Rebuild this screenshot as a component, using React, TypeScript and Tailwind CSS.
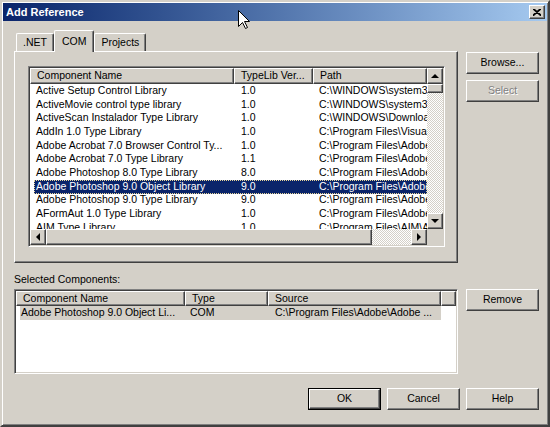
import React from "react";

// classic 3d bevels
const raised =
  "border border-t-white border-l-white border-r-[#404040] border-b-[#404040] shadow-[inset_-1px_-1px_#808080,inset_1px_1px_#d4d0c8]";
const sunken =
  "border border-t-[#808080] border-l-[#808080] border-r-white border-b-white shadow-[inset_1px_1px_#404040,inset_-1px_-1px_#d4d0c8]";
const dither =
  "bg-[repeating-conic-gradient(#d4d0c8_0%_25%,#ffffff_0%_50%)] bg-[length:2px_2px]";

const rows: [string, string, string][] = [
  ["Active Setup Control Library", "1.0", "C:\\WINDOWS\\system32\\asctrls.ocx"],
  ["ActiveMovie control type library", "1.0", "C:\\WINDOWS\\system32\\quartz.dll"],
  ["ActiveScan Instalador Type Library", "1.0", "C:\\WINDOWS\\Downloaded Program Files"],
  ["AddIn 1.0 Type Library", "1.0", "C:\\Program Files\\Visual Studio"],
  ["Adobe Acrobat 7.0 Browser Control Ty...", "1.0", "C:\\Program Files\\Adobe\\Acrobat"],
  ["Adobe Acrobat 7.0 Type Library", "1.1", "C:\\Program Files\\Adobe\\Acrobat"],
  ["Adobe Photoshop 8.0 Type Library", "8.0", "C:\\Program Files\\Adobe\\Photoshop"],
  ["Adobe Photoshop 9.0 Object Library", "9.0", "C:\\Program Files\\Adobe\\Photoshop"],
  ["Adobe Photoshop 9.0 Type Library", "9.0", "C:\\Program Files\\Adobe\\Photoshop"],
  ["AFormAut 1.0 Type Library", "1.0", "C:\\Program Files\\Adobe\\Acrobat"],
  ["AIM Type Library", "1.0", "C:\\Program Files\\AIM\\AIM.exe"],
];

function Btn({ label, disabled, isDefault }: { label: string; disabled?: boolean; isDefault?: boolean }) {
  const inner = (
    <div
      className={`flex h-full w-full items-center justify-center ${raised} ${
        disabled ? "text-[#808080] [text-shadow:1px_1px_#ffffff]" : "text-black"
      }`}
    >
      {label}
    </div>
  );
  if (isDefault) {
    return <div className="h-[22px] w-[73px] border border-black">{inner}</div>;
  }
  return <div className="h-[22px] w-[73px]">{inner}</div>;
}

function Arrow({ dir }: { dir: "up" | "down" | "left" | "right" }) {
  const pts = {
    up: "4,1 0,5 8,5",
    down: "0,1 8,1 4,5",
    left: "5,0 5,8 1,4",
    right: "1,0 1,8 5,4",
  }[dir];
  const vert = dir === "up" || dir === "down";
  return (
    <div className={`flex h-[16px] w-[16px] shrink-0 items-center justify-center bg-[#d4d0c8] ${raised}`}>
      <svg width={vert ? 8 : 6} height={vert ? 6 : 8} viewBox={vert ? "0 0 8 6" : "0 0 6 8"}>
        <polygon points={pts} fill="#000" />
      </svg>
    </div>
  );
}

function HeadCell({ w, children }: { w: string; children?: React.ReactNode }) {
  return (
    <div className={`${w} flex h-full shrink-0 items-center overflow-hidden whitespace-nowrap bg-[#d4d0c8] pl-[6px] ${raised}`}>
      {children}
    </div>
  );
}

function Tab({ label, active }: { label: string; active?: boolean }) {
  return (
    <div
      className={`flex items-center rounded-t-[2px] border-l border-t border-r border-t-white border-l-white border-r-[#404040] bg-[#d4d0c8] shadow-[inset_-1px_0_#808080] ${
        active ? "relative z-10 -mb-[1px] h-[22px] px-[7px]" : "h-[18px] px-[6px]"
      }`}
    >
      {label}
    </div>
  );
}

function Cursor() {
  return (
    <svg className="absolute left-[236px] top-[8px] z-20" width="13" height="20" viewBox="0 0 13 20">
      <path
        d="M0.5 0.5 L0.5 16.5 L4.5 12.5 L7.5 18.5 L9.5 17.5 L6.5 11.5 L11.5 11.5 Z"
        fill="#fff"
        stroke="#000"
        strokeWidth="1"
      />
    </svg>
  );
}

export default function App() {
  return (
    <div className="relative h-[427px] w-[550px] overflow-hidden border-2 border-t-[#d4d0c8] border-l-[#d4d0c8] border-r-[#404040] border-b-[#404040] bg-[#d4d0c8] p-[1px] font-['Liberation_Sans',Arial,sans-serif] text-[10.5px] text-black shadow-[inset_1px_1px_#ffffff,inset_-1px_-1px_#808080]">
      <Cursor />
      {/* title bar */}
      <div className="flex h-[18px] items-center justify-between bg-gradient-to-r from-[#0a246a] to-[#a6caf0] pl-[3px] pr-[2px]">
        <span className="text-[11px] font-bold text-white">Add Reference</span>
        <div className={`flex h-[14px] w-[16px] items-center justify-center bg-[#d4d0c8] ${raised}`}>
          <svg width="8" height="7" viewBox="0 0 8 7">
            <path d="M0 0 L8 7 M8 0 L0 7 M1 0 L8 6 M7 0 L0 6" stroke="#000" strokeWidth="1.2" />
          </svg>
        </div>
      </div>

      <div className="ml-[11px] w-[525px]">
        {/* top: tabs + list + side buttons */}
        <div className="mt-[9px] flex gap-[8px]">
          <div className="w-[444px]">
            <div className="flex h-[21px] items-end pl-[2px]">
              <Tab label=".NET" />
              <Tab label="COM" active />
              <Tab label="Projects" />
            </div>
            <div className="h-[212px] border border-t-white border-l-white border-r-[#404040] border-b-[#404040] pl-[13px] pt-[14px] shadow-[inset_-1px_-1px_#808080]">
              <div className={`flex h-[181px] w-[417px] flex-col bg-white ${sunken} p-[1px]`}>
                <div className="flex min-h-0 flex-1">
                  <div className="flex min-w-0 flex-1 flex-col">
                    <div className="flex h-[16px] shrink-0">
                      <HeadCell w="w-[204px]">Component Name</HeadCell>
                      <HeadCell w="w-[79px]">TypeLib Ver...</HeadCell>
                      <HeadCell w="w-[114px]">Path</HeadCell>
                    </div>
                    <div className="min-h-0 flex-1 overflow-hidden">
                      {rows.map((r, i) => {
                        const sel = i === 7;
                        return (
                          <div key={i} className="flex h-[13.7px] items-center">
                            <div
                              className={`ml-[4px] flex h-full items-center ${
                                sel
                                  ? "bg-[#0a246a] text-white outline outline-1 -outline-offset-1 outline-dotted outline-[#e6d49a]"
                                  : ""
                              }`}
                            >
                              <div className="w-[200px] overflow-hidden whitespace-nowrap pl-[2px]">{r[0]}</div>
                              <div className="w-[79px] overflow-hidden whitespace-nowrap pl-[7px]">{r[1]}</div>
                              <div className="w-[114px] overflow-hidden whitespace-nowrap pl-[6px]">{r[2]}</div>
                            </div>
                          </div>
                        );
                      })}
                    </div>
                  </div>
                  {/* vertical scrollbar */}
                  <div className={`flex w-[16px] flex-col ${dither}`}>
                    <Arrow dir="up" />
                    <div className={`h-[9px] w-[16px] bg-[#d4d0c8] ${raised}`} />
                    <div className="flex-1" />
                    <Arrow dir="down" />
                  </div>
                </div>
                {/* horizontal scrollbar */}
                <div className="flex h-[16px] shrink-0">
                  <div className={`flex flex-1 ${dither}`}>
                    <Arrow dir="left" />
                    <div className={`h-[16px] w-[326px] bg-[#d4d0c8] ${raised}`} />
                    <div className="flex-1" />
                    <Arrow dir="right" />
                  </div>
                  <div className="w-[16px] bg-[#d4d0c8]" />
                </div>
              </div>
            </div>
          </div>
          <div className="flex flex-col gap-[6px] pt-[22px]">
            <Btn label="Browse..." />
            <Btn label="Select" disabled />
          </div>
        </div>

        <div className="mt-[10px] flex h-[14px] items-center">Selected Components:</div>

        {/* lower list + remove */}
        <div className="mt-[2px] flex gap-[8px]">
          <div className={`flex h-[85px] w-[444px] flex-col bg-white ${sunken} p-[1px]`}>
            <div className="flex h-[15px] shrink-0">
              <HeadCell w="w-[169px]">Component Name</HeadCell>
              <HeadCell w="w-[83px]">Type</HeadCell>
              <HeadCell w="w-[173px]">Source</HeadCell>
              <div className={`flex-1 bg-[#d4d0c8] ${raised}`} />
            </div>
            <div className="flex h-[14px] items-center">
              <div className="ml-[4px] flex h-full items-center bg-[#d4d0c8]">
                <div className="w-[165px] overflow-hidden whitespace-nowrap pl-[1px]">Adobe Photoshop 9.0 Object Li...</div>
                <div className="w-[85px] overflow-hidden whitespace-nowrap pl-[5px]">COM</div>
                <div className="w-[171px] overflow-hidden whitespace-nowrap pl-[5px]">C:\Program Files\Adobe\Adobe ...</div>
              </div>
            </div>
          </div>
          <Btn label="Remove" />
        </div>

        {/* bottom buttons */}
        <div className="mt-[14px] flex justify-end gap-[6px]">
          <Btn label="OK" isDefault />
          <Btn label="Cancel" />
          <Btn label="Help" />
        </div>
      </div>
    </div>
  );
}
